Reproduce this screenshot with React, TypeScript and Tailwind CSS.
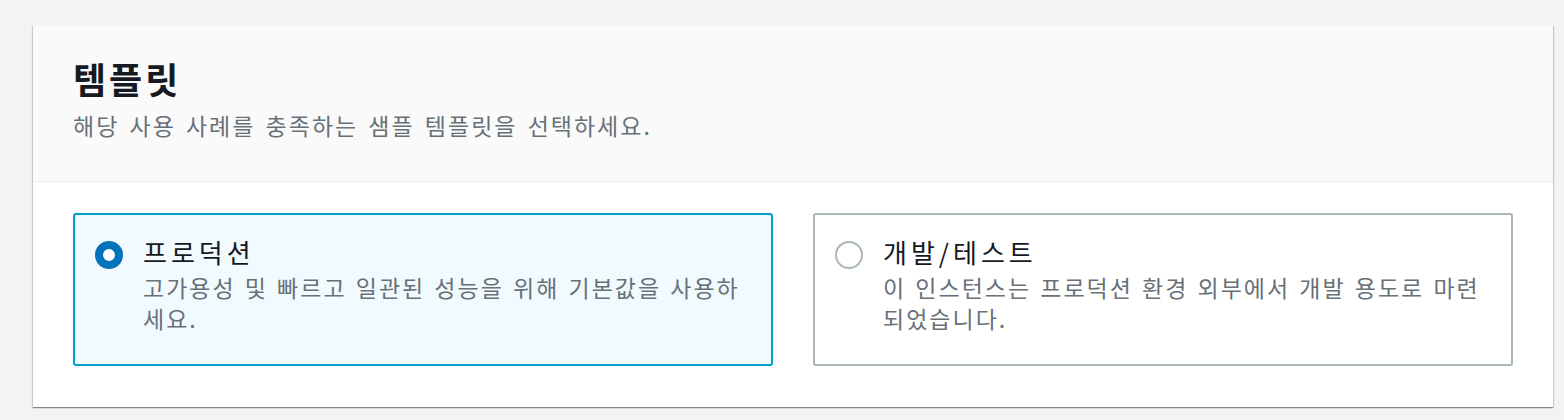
import React, { useState } from 'react';

const options = [
  {
    id: 'production',
    label: '프로덕션',
    lines: ['고가용성 및 빠르고 일관된 성능을 위해 기본값을 사용하', '세요.'],
  },
  {
    id: 'devtest',
    label: '개발/테스트',
    lines: ['이 인스턴스는 프로덕션 환경 외부에서 개발 용도로 마련', '되었습니다.'],
  },
];

export default function App() {
  const [selected, setSelected] = useState('production');

  return (
    <div
      className="min-h-[420px] bg-[#f2f3f3] pt-[25px] pl-[33px] pr-[11px]"
      style={{ fontFamily: '"Noto Sans CJK KR", "Noto Sans", sans-serif' }}
    >
      <div className="bg-white shadow-[0_1px_1px_0_rgba(0,28,36,0.3),1px_1px_1px_0_rgba(0,28,36,0.15),-1px_1px_1px_0_rgba(0,28,36,0.15)]">
        {/* header */}
        <div className="bg-[#fafafa] border-b border-[#eaeded] px-10 pt-[31px] pb-[41px]">
          <h2 className="text-[36px] leading-[44px] font-bold tracking-[3px] text-[#16191f]">템플릿</h2>
          <p className="text-[23px] leading-[30px] tracking-[2px] [word-spacing:3px] text-[#687078] mt-[10px]">
            해당 사용 사례를 충족하는 샘플 템플릿을 선택하세요.
          </p>
        </div>

        {/* options */}
        <div className="grid grid-cols-2 gap-10 px-10 pt-[31px] pb-[41px]">
          {options.map((opt) => {
            const active = selected === opt.id;
            return (
              <button
                key={opt.id}
                type="button"
                onClick={() => setSelected(opt.id)}
                className={
                  active
                    ? 'flex items-start gap-[20px] text-left h-[153px] rounded-[3px] border-2 border-[#00a1c9] bg-[#f1faff] pl-[20px] pt-[21px]'
                    : 'flex items-start gap-[20px] text-left h-[153px] rounded-[3px] border-2 border-[#aab7b8] bg-white pl-[20px] pt-[21px]'
                }
              >
                <span
                  className={
                    active
                      ? 'mt-[5px] w-[28px] h-[28px] shrink-0 rounded-full border-[8px] border-[#0073bb] bg-white'
                      : 'mt-[5px] w-[28px] h-[28px] shrink-0 rounded-full border-2 border-[#aab7b8] bg-white'
                  }
                />
                <span className="flex flex-col">
                  <span className="text-[26px] leading-[32px] tracking-[4px] text-[#16191f]">{opt.label}</span>
                  <span className="mt-[4px] text-[23px] leading-[31px] tracking-[2px] [word-spacing:2px] text-[#687078] whitespace-nowrap">
                    {opt.lines[0]}
                    <br />
                    {opt.lines[1]}
                  </span>
                </span>
              </button>
            );
          })}
        </div>
      </div>
    </div>
  );
}
